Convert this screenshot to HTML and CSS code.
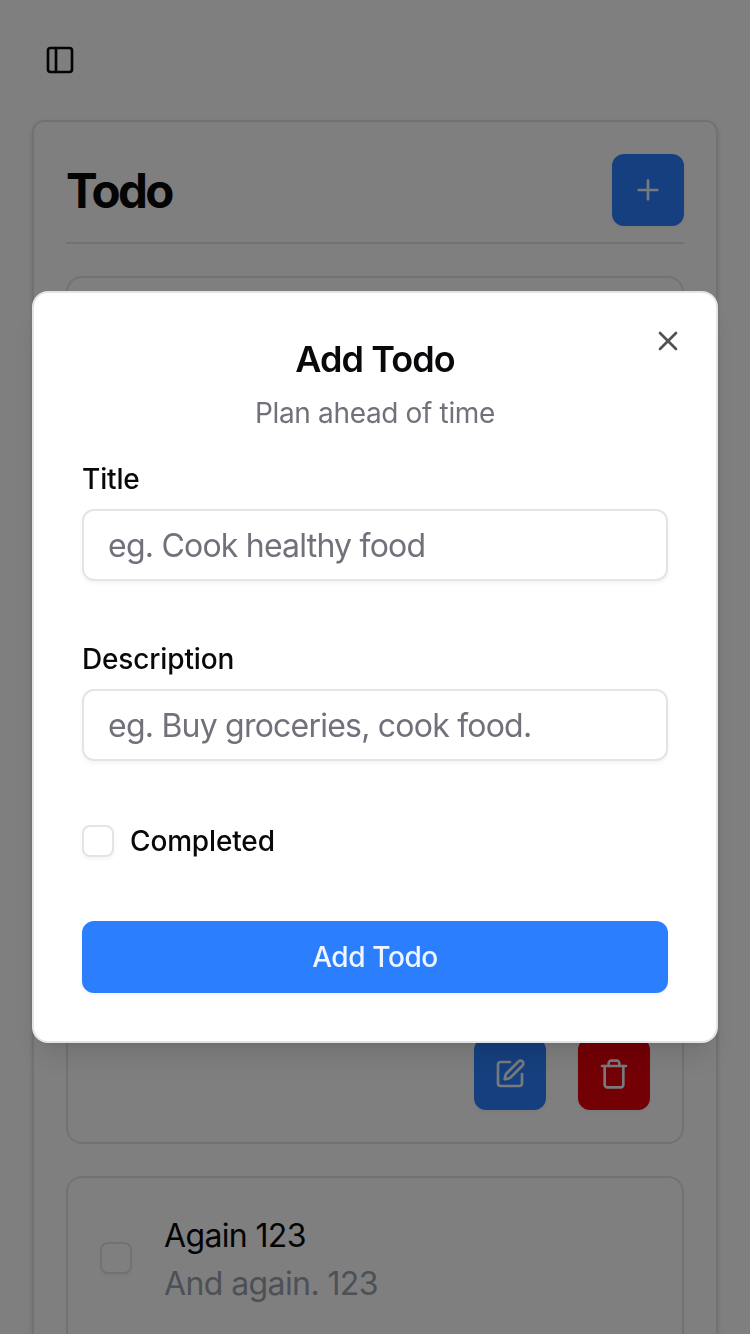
FILE: index.html
```html
<!DOCTYPE html>
<html lang="en">
<head>
<meta charset="utf-8">
<title>Todo</title>
<link rel="stylesheet" href="styles.css">
</head>
<body>
<div class="page">
  <header class="topbar">
    <svg class="icon" viewBox="0 0 24 24"><rect width="18" height="18" x="3" y="3" rx="2"/><path d="M9 3v18"/></svg>
  </header>
  <main class="card">
    <div class="card-header">
      <h1 class="card-title">Todo</h1>
      <button class="btn btn-icon"><svg class="icon" viewBox="0 0 24 24"><path d="M5 12h14M12 5v14"/></svg></button>
    </div>
    <section class="item item-tall">
      <div class="actions">
        <button class="btn btn-icon"><svg class="icon" viewBox="0 0 24 24"><path d="M12 3H5a2 2 0 0 0-2 2v14a2 2 0 0 0 2 2h14a2 2 0 0 0 2-2v-7"/><path d="M18.375 2.625a1 1 0 0 1 3 3l-9.013 9.014a2 2 0 0 1-.853.505l-2.873.84a.5.5 0 0 1-.62-.62l.84-2.873a2 2 0 0 1 .506-.852z"/></svg></button>
        <button class="btn btn-icon btn-danger"><svg class="icon" viewBox="0 0 24 24"><path d="M3 6h18"/><path d="M19 6v14c0 1-1 2-2 2H7c-1 0-2-1-2-2V6"/><path d="M8 6V4c0-1 1-2 2-2h4c1 0 2 1 2 2v2"/></svg></button>
      </div>
    </section>
    <section class="item item-next">
      <div class="item-row">
        <input type="checkbox" class="checkbox">
        <div class="item-text">
          <div class="item-title">Again 123</div>
          <div class="item-desc">And again. 123</div>
        </div>
      </div>
    </section>
  </main>
</div>
<div class="overlay">
  <form class="dialog">
    <div class="dialog-header">
      <h2 class="dialog-title">Add Todo</h2>
      <p class="dialog-desc">Plan ahead of time</p>
    </div>
    <div class="fields">
      <div class="field">
        <label class="label" for="title">Title</label>
        <input id="title" class="input" placeholder="eg. Cook healthy food">
      </div>
      <div class="field">
        <label class="label" for="desc">Description</label>
        <input id="desc" class="input" placeholder="eg. Buy groceries, cook food.">
      </div>
      <div class="check-row">
        <input type="checkbox" class="checkbox" id="done">
        <label class="label" for="done">Completed</label>
      </div>
      <button type="button" class="btn btn-submit">Add Todo</button>
    </div>
    <svg class="icon close" viewBox="0 0 24 24"><path d="M18 6 6 18M6 6l12 12"/></svg>
  </form>
</div>
</body>
</html>
```
FILE: styles.css
```css
* { box-sizing: border-box; margin: 0; }
html, body { height: 100%; overflow: hidden; }
body { background: #fff; color: #09090b; font-family: Inter, "Liberation Sans", sans-serif; font-size: 32px; line-height: 48px; }
button, input { font: inherit; }
.icon { display: block; width: 32px; height: 32px; fill: none; stroke: currentColor; stroke-width: 2; stroke-linecap: round; stroke-linejoin: round; }
.page { height: 100vh; overflow: hidden; padding: 0 32px; }
.topbar { height: 120px; padding: 44px 12px; }
.card { height: 1214px; padding: 32px 32px 0; border: 2px solid #e4e4e7; border-bottom: 0; border-radius: 12px 12px 0 0; box-shadow: 0 2px 6px rgba(0,0,0,.1), 0 2px 4px -2px rgba(0,0,0,.1); display: flex; flex-direction: column; gap: 32px; }
.card-header { flex: none; display: flex; justify-content: space-between; align-items: center; padding-bottom: 16px; border-bottom: 2px solid #e4e4e7; }
.card-title { font-size: 47.5px; line-height: 70px; padding-top: 2px; font-weight: 700; letter-spacing: -2.6px; }
.btn { border: 0; border-radius: 12px; background: #2b7fff; color: #eff6ff; height: 72px; box-shadow: 0 2px 4px rgba(0,0,0,.05); }
.btn-icon { width: 72px; padding: 20px; }
.btn-danger { background: #e7000b; }
.item { flex: none; border: 2px solid #e4e4e7; border-radius: 16px; padding: 32px; }
.item-tall { height: 868px; display: flex; flex-direction: column; justify-content: flex-end; }
.item-next { flex: 1; border-bottom: 0; border-radius: 16px 16px 0 0; padding-bottom: 0; }
.actions { display: flex; justify-content: flex-end; gap: 32px; }
.item-row { display: flex; align-items: center; gap: 32px; }
.item-text { padding-top: 2px; margin-bottom: -2px; }
.item-title { letter-spacing: -.65px; }
.item-desc { color: #99a1af; letter-spacing: -.6px; }
.checkbox { appearance: none; flex: none; width: 32px; height: 32px; border: 2px solid #e4e4e7; border-radius: 8px; background: #fff; box-shadow: 0 2px 4px rgba(0,0,0,.05); }
.overlay { position: fixed; inset: 0; padding: 0 32px; background: rgba(0,0,0,.5); display: flex; align-items: center; }
.dialog { position: relative; width: 100%; padding: 48px; background: #fff; border: 2px solid #e4e4e7; border-radius: 16px; box-shadow: 0 20px 30px -6px rgba(0,0,0,.1), 0 8px 12px -8px rgba(0,0,0,.1); display: flex; flex-direction: column; gap: 32px; }
.dialog-header { display: flex; flex-direction: column; gap: 16px; text-align: center; }
.dialog-title { font-size: 36px; line-height: 36px; font-weight: 600; letter-spacing: -.9px; }
.dialog-desc { font-size: 28px; line-height: 40px; letter-spacing: -.35px; color: #71717b; }
.fields { display: flex; flex-direction: column; gap: 64px; }
.field { display: flex; flex-direction: column; gap: 16px; }
.label { font-size: 28px; line-height: 28px; font-weight: 500; letter-spacing: -.15px; }
.input { width: 100%; height: 72px; padding: 2px 24px; border: 2px solid #e4e4e7; border-radius: 12px; background: transparent; box-shadow: 0 2px 4px rgba(0,0,0,.05); letter-spacing: -.78px; }
.input::placeholder { color: #71717b; opacity: 1; }
.check-row { display: flex; align-items: center; gap: 16px; }
.btn-submit { width: 100%; font-size: 28px; line-height: 40px; font-weight: 500; letter-spacing: -.4px; }
.close { position: absolute; top: 32px; right: 32px; opacity: .7; }
```
